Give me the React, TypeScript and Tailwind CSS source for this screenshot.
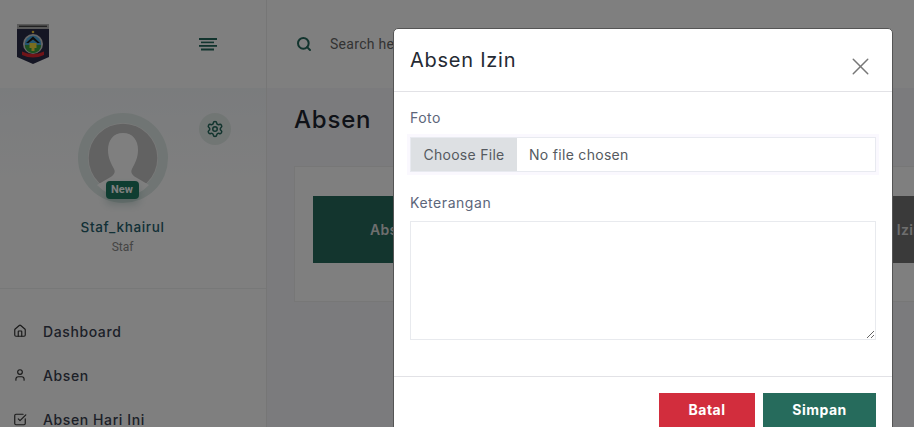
import React from "react";
import { House, User, SquareCheckBig, Settings, Search, X } from "lucide-react";

const mont = "font-['Inter','Liberation_Sans',sans-serif]";

function Logo() {
  return (
    <svg width="32" height="40" viewBox="0 0 32 40" className="block">
      <path d="M0 0H32V33L16 40L0 33Z" fill="#2a2c48" />
      <rect x="0" y="0" width="32" height="5" fill="#b4b4b4" />
      <rect x="2" y="1.6" width="28" height="1.4" fill="#444" />
      <circle cx="16" cy="8" r="1.3" fill="#f0c838" />
      <circle cx="16" cy="20" r="10" fill="#cfcfcf" />
      <circle cx="16" cy="20" r="8.2" fill="#46a8e0" />
      <path d="M7.8 21a8.2 8.2 0 0 0 16.4 0Z" fill="#3aa040" />
      <path d="M9 19L16 12.5L23 19H20.5L16 15.5L11.5 19Z" fill="#1c1c1c" />
      <path d="M12.5 19h7v5h-2v3h-3v-3h-2Z" fill="#f0d840" />
      <path d="M5 27.5q11 5 22 0v3.5q-11 5-22 0Z" fill="#e02830" />
    </svg>
  );
}

function Avatar() {
  return (
    <svg width="90" height="90" viewBox="0 0 90 90" className="block">
      <circle cx="45" cy="45" r="45" fill="#e0ebe8" />
      <circle cx="45" cy="45" r="35" fill="#f4f4f4" />
      <circle cx="45" cy="45" r="34.3" fill="#c4c4c4" />
      <path d="M45 20c-10 0-15 7.500-15 17 0 8 3 13 6 19 1.500 3 .5 5-2.500 7.500L19 72a35 35 0 0 0 52 0L56.500 63.500C53.500 61 52.500 59 54 56c3-6 6-11 6-19 0-9.500-5-17-15-17Z" fill="#ffffff" />
    </svg>
  );
}

function NavItem({ icon, label }: { icon: React.ReactNode; label: string }) {
  return (
    <div className="flex h-[44px] items-center gap-[16px] pl-[13px]">
      <span className="flex w-[14px] justify-center text-[#333]">{icon}</span>
      <span className={`${mont} text-[14px] font-medium tracking-[0.6px] text-[#3a4150]`}>{label}</span>
    </div>
  );
}

export default function App() {
  return (
    <div className="relative flex h-[427px] w-[914px] overflow-hidden bg-white">
      <aside className="flex w-[267px] shrink-0 flex-col border-r border-[#ececec] bg-white">
        <div className="flex h-[88px] shrink-0 items-center justify-between pl-[17px] pr-[49px]">
          <Logo />
          <svg width="18" height="13" viewBox="0 0 18 13" className="block text-[#24695c]" fill="currentColor">
            <rect x="0" y="0" width="18" height="2" />
            <rect x="2" y="3.6" width="13" height="1.600" />
            <rect x="0" y="7" width="18" height="1.800" />
            <rect x="2" y="10.500" width="13" height="2" />
          </svg>
        </div>
        <div className="relative flex h-[201px] shrink-0 flex-col items-center border-b border-[#eef1f0] bg-gradient-to-b from-[#f5f8fb] to-white to-50% pr-[21px] pt-[25px]">
          <button className="absolute right-[35px] top-[25px] flex h-[32px] w-[32px] items-center justify-center rounded-full bg-[#e3ece9]">
            <Settings size={18} strokeWidth={2} className="text-[#24695c]" />
          </button>
          <div className="relative h-[90px] w-[90px]">
            <Avatar />
            <span className="absolute left-[28px] top-[68px] flex h-[18px] w-[33px] items-center justify-center rounded-[4px] bg-[#1f7a63] font-['Roboto',sans-serif] text-[11px] font-bold text-white shadow-[0_5px_8px_rgba(36,105,92,0.25)]">
              New
            </span>
          </div>
          <div className={`${mont} mt-[14px] text-[13.5px] font-medium tracking-[0.65px] text-[#24606c]`}>Staf_khairul</div>
          <div className="mt-[1px] font-['Roboto',sans-serif] text-[12px] text-[#8a8a8a]">Staf</div>
        </div>
        <nav className="flex flex-col pt-[20px]">
          <NavItem icon={<House size={18} strokeWidth={2} />} label="Dashboard" />
          <NavItem icon={<User size={18} strokeWidth={2} />} label="Absen" />
          <NavItem icon={<SquareCheckBig size={17} strokeWidth={2} />} label="Absen Hari Ini" />
        </nav>
      </aside>

      <main className="flex min-w-0 flex-1 flex-col bg-[#f6f7fa]">
        <header className="flex h-[88px] shrink-0 items-center gap-[18px] bg-white pl-[29px]">
          <Search size={16} strokeWidth={3} className="text-[#24695c]" />
          <span className="font-['Roboto',sans-serif] text-[14px] tracking-[0.3px] text-[#666]">Search here...</span>
        </header>
        <div className="flex flex-1 flex-col pl-[27px]">
          <h1 className={`${mont} mt-[16px] text-[24px] font-medium leading-[32px] tracking-[0.8px] text-[#1e2530]`}>Absen</h1>
          <div className="mt-[30px] flex h-[136px] w-[700px] items-start gap-[20px] border border-[#eeeeee] bg-white pl-[18px] pt-[29px]">
            <div className={`${mont} flex h-[67px] w-[455px] shrink-0 items-center bg-[#266b5c] pl-[57px] text-[14px] font-semibold tracking-[0.3px] text-[#dddddd]`}>Absen Masuk</div>
            <div className={`${mont} flex h-[67px] w-[300px] shrink-0 items-center bg-[#757575] pl-[60px] text-[14px] font-semibold tracking-[0.3px] text-[#dddddd]`}>Absen Izin</div>
          </div>
        </div>
      </main>

      <div className="absolute inset-0 bg-black/50" />

      <div className="absolute left-[393px] top-[28px] w-[500px] rounded-[5px] border border-[#555] bg-white">
        <div className="flex h-[63px] items-center justify-between border-b border-[#e2e2e6] pl-[16px] pr-[17px]">
          <h2 className={`${mont} text-[20px] font-normal leading-[30px] tracking-[0.75px] text-[#252a33]`}>Absen Izin</h2>
          <X size={29} strokeWidth={1.2} className="mt-[12px] text-[#777]" />
        </div>
        <div className="flex flex-col px-[16px] pb-[36px] pt-[16px]">
          <label className={`${mont} text-[14px] leading-[20px] tracking-[0.5px] text-[#5c667a]`}>Foto</label>
          <div className="mt-[9px] flex h-[35px] border border-[#e8eaf0] shadow-[0_0_0_3px_#faf8fe]">
            <span className={`${mont} flex w-[106px] items-center justify-center bg-[#dde0e3] pb-[1px] text-[14px] tracking-[0.28px] text-[#555a60]`}>Choose File</span>
            <span className={`${mont} flex items-center pb-[1px] pl-[12px] text-[14px] tracking-[0.3px] text-[#555a60]`}>No file chosen</span>
          </div>
          <label className={`${mont} mt-[21px] text-[14px] leading-[20px] tracking-[0.55px] text-[#5c667a]`}>Keterangan</label>
          <textarea className="mt-[8px] block h-[119px] w-full border border-[#e8eaee] bg-white" />
        </div>
        <div className="flex justify-end gap-[8px] border-t border-[#e2e2e6] px-[16px] pb-[16px] pt-[16px]">
          <button className={`${mont} h-[35px] w-[96px] bg-[#d22d3d] pb-[2px] text-[14px] font-bold tracking-[0.5px] text-white`}>Batal</button>
          <button className={`${mont} h-[35px] w-[113px] bg-[#266b5c] pb-[2px] text-[14px] font-bold tracking-[0.5px] text-white`}>Simpan</button>
        </div>
      </div>
    </div>
  );
}
